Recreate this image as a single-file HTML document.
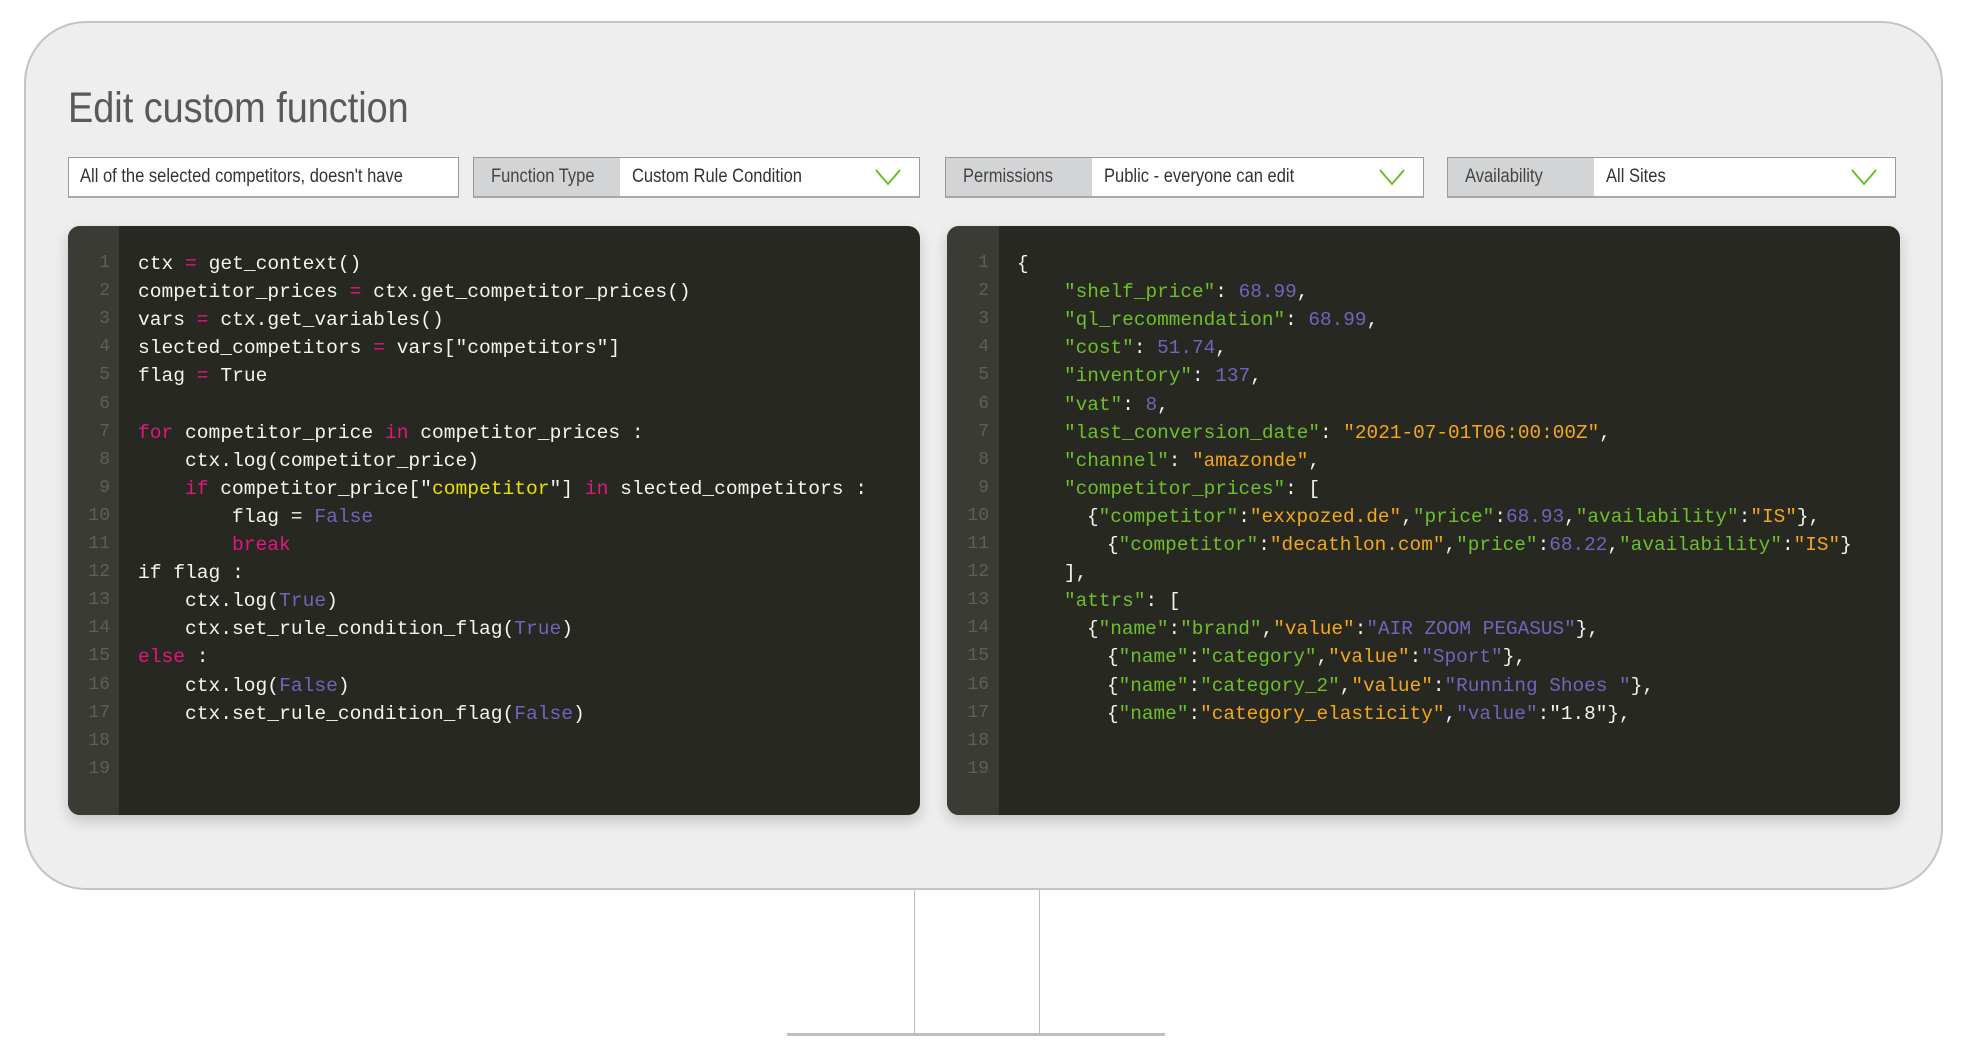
<!DOCTYPE html>
<html><head><meta charset="utf-8"><style>
*{margin:0;padding:0;box-sizing:border-box}
body{width:1980px;height:1057px;background:#fff;position:relative;overflow:hidden;font-family:"Liberation Sans Narrow","Liberation Sans",sans-serif}
.mon{position:absolute;left:24px;top:21px;width:1919px;height:869px;background:#edeeed;border:2px solid #c4c4c4;border-radius:62px}
.title{position:absolute;left:68px;top:84px;font-size:43px;color:#58595b;font-weight:normal;transform:scaleX(0.88);transform-origin:0 0}
.inp{position:absolute;top:157px;height:41px;background:#fff;border:1px solid #9a9a9a;border-bottom:2px solid #a8a8a8;font-size:19px;color:#333;line-height:38px;white-space:nowrap;overflow:hidden}
.lab{position:absolute;left:0;top:0;bottom:0;background:#d3d4d6;color:#444;padding-left:17px}
.val{position:absolute;top:0;bottom:0;padding-left:12px;color:#333}
.n{display:inline-block;transform:scaleX(0.87);transform-origin:0 50%}
.chev{position:absolute;right:18px;top:10px}
.ed{position:absolute;top:226px;height:589px;background:#272822;border-radius:12px;box-shadow:0 6px 14px rgba(0,0,0,.18);overflow:hidden}
.gut{position:absolute;left:0;top:0;bottom:0;width:51px;background:#3b3b36}
.ln{position:absolute;left:0;width:42px;text-align:right;color:#5f5f59;font-family:"Liberation Mono",monospace;font-size:18px}
.cl{position:absolute;white-space:pre;color:#f5f5ee;font-family:"Liberation Mono",monospace}
.k{color:#e6157e}.p{color:#7264bb}.y{color:#ece000}.g{color:#6fbf2a}.o{color:#f3a81a}
.st{position:absolute;background:#bdbdbd}
</style></head><body>
<div class="mon"></div>
<div class="title">Edit custom function</div>

<div class="inp" style="left:68px;width:391px"><span class="val" style="padding-left:11px"><span class="n">All of the selected competitors, doesn't have</span></span></div>

<div class="inp" style="left:473px;width:447px"><span class="lab" style="width:146px"><span class="n">Function Type</span></span><span class="val" style="left:146px"><span class="n">Custom Rule Condition</span></span>
<svg class="chev" width="26" height="18" viewBox="0 0 26 18"><path d="M1 2 L13 16 L25 2" fill="none" stroke="#6cc02a" stroke-width="2"/></svg></div>

<div class="inp" style="left:945px;width:479px"><span class="lab" style="width:146px"><span class="n">Permissions</span></span><span class="val" style="left:146px"><span class="n">Public - everyone can edit</span></span>
<svg class="chev" width="26" height="18" viewBox="0 0 26 18"><path d="M1 2 L13 16 L25 2" fill="none" stroke="#6cc02a" stroke-width="2"/></svg></div>

<div class="inp" style="left:1447px;width:449px"><span class="lab" style="width:146px"><span class="n">Availability</span></span><span class="val" style="left:146px"><span class="n">All Sites</span></span>
<svg class="chev" width="26" height="18" viewBox="0 0 26 18"><path d="M1 2 L13 16 L25 2" fill="none" stroke="#6cc02a" stroke-width="2"/></svg></div>

<div class="ed" style="left:68px;width:852px"><div class="gut"></div>
<div id="L"></div></div>
<div class="ed" style="left:947px;width:953px"><div class="gut" style="width:52px"></div>
<div id="R"></div></div>

<div class="st" style="left:914px;top:890px;width:1px;height:145px"></div>
<div class="st" style="left:1039px;top:890px;width:1px;height:145px"></div>
<div class="st" style="left:787px;top:1033px;width:378px;height:3px"></div>

<script>
function build(id,lines,left,fs){
 var h='';
 for(var i=0;i<19;i++){
  var t=24+i*28.1;
  h+='<div class="ln" style="top:'+(t+3)+'px">'+(i+1)+'</div>';
  if(lines[i]) h+='<div class="cl" style="top:'+t+'px;left:'+(left+lines[i][0])+'px;font-size:'+fs+'px;line-height:28px">'+lines[i][1]+'</div>';
 }
 document.getElementById(id).innerHTML=h;
}
build('L',[
[0,'ctx <span class="k">=</span> get_context()'],
[0,'competitor_prices <span class="k">=</span> ctx.get_competitor_prices()'],
[0,'vars <span class="k">=</span> ctx.get_variables()'],
[0,'slected_competitors <span class="k">=</span> vars["competitors"]'],
[0,'flag <span class="k">=</span> True'],
null,
[0,'<span class="k">for</span> competitor_price <span class="k">in</span> competitor_prices :'],
[47,'ctx.log(competitor_price)'],
[47,'<span class="k">if</span> competitor_price["<span class="y">competitor</span>"] <span class="k">in</span> slected_competitors :'],
[94,'flag = <span class="p">False</span>'],
[94,'<span class="k">break</span>'],
[0,'if flag :'],
[47,'ctx.log(<span class="p">True</span>)'],
[47,'ctx.set_rule_condition_flag(<span class="p">True</span>)'],
[0,'<span class="k">else</span> :'],
[47,'ctx.log(<span class="p">False</span>)'],
[47,'ctx.set_rule_condition_flag(<span class="p">False</span>)']
],70,19.6);
function g(s){return '<span class="g">"'+s+'"</span>'}
function o(s){return '<span class="o">"'+s+'"</span>'}
function p(s){return '<span class="p">'+s+'</span>'}
build('R',[
[0,'{'],
[47,g('shelf_price')+': '+p('68.99')+','],
[47,g('ql_recommendation')+': '+p('68.99')+','],
[47,g('cost')+': '+p('51.74')+','],
[47,g('inventory')+': '+p('137')+','],
[47,g('vat')+': '+p('8')+','],
[47,g('last_conversion_date')+': '+o('2021-07-01T06:00:00Z')+','],
[47,g('channel')+': '+o('amazonde')+','],
[47,g('competitor_prices')+': ['],
[70,'{'+g('competitor')+':'+o('exxpozed.de')+','+g('price')+':'+p('68.93')+','+g('availability')+':'+o('IS')+'},'],
[90,'{'+g('competitor')+':'+o('decathlon.com')+','+g('price')+':'+p('68.22')+','+g('availability')+':'+o('IS')+'}'],
[47,'],'],
[47,g('attrs')+': ['],
[70,'{'+g('name')+':'+g('brand')+','+o('value')+':'+p('"AIR ZOOM PEGASUS"')+'},'],
[90,'{'+g('name')+':'+g('category')+','+o('value')+':'+p('"Sport"')+'},'],
[90,'{'+g('name')+':'+g('category_2')+','+o('value')+':'+p('"Running Shoes "')+'},'],
[90,'{'+g('name')+':'+o('category_elasticity')+','+p('"value"')+':"1.8"},']
],70,19.4);
</script>
</body></html>
